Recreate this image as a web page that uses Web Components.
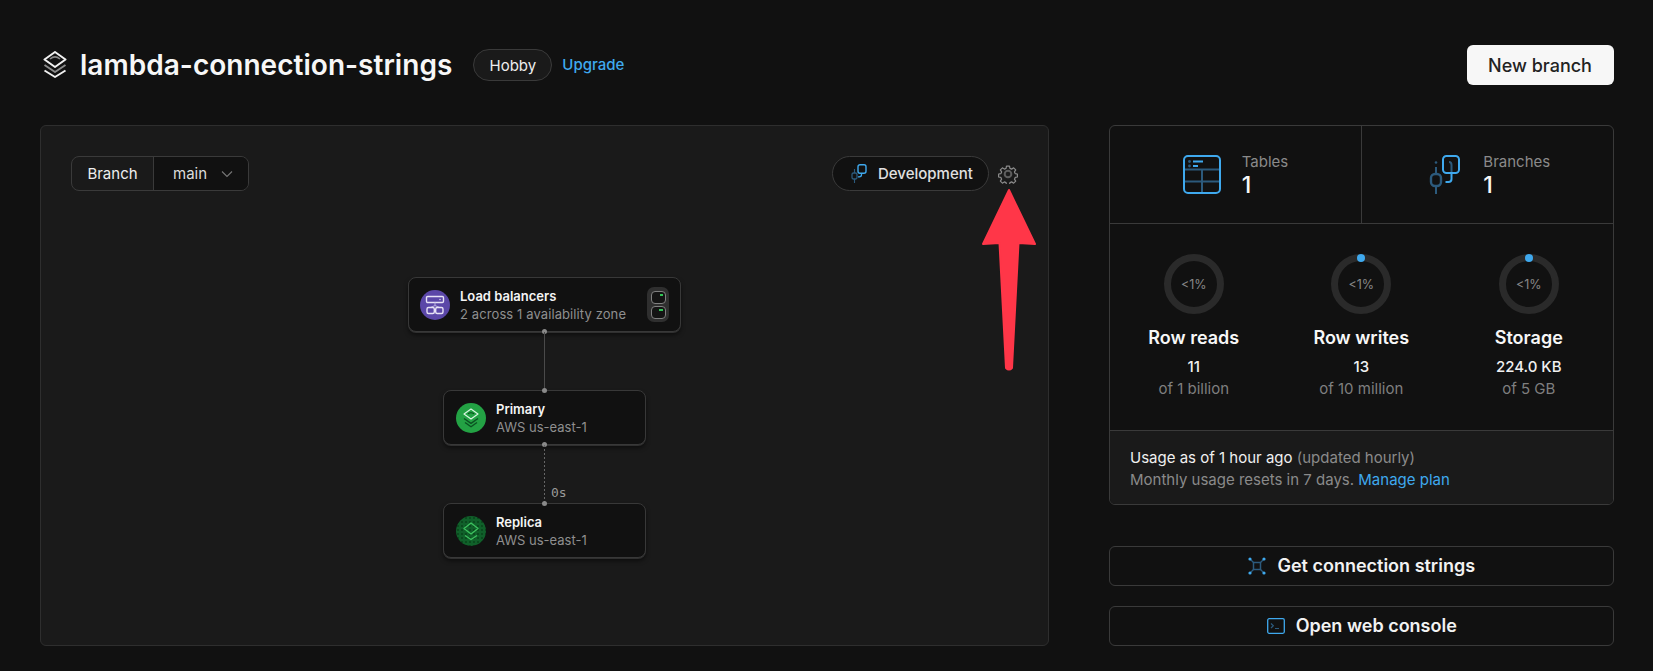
<!DOCTYPE html>
<html>
<head>
<meta charset="utf-8">
<title>lambda-connection-strings</title>
<style>
  html, body { margin: 0; padding: 0; background: #111111; }
  body { font-family: Inter, "Liberation Sans", sans-serif; color: #f5f5f5; }
</style>
</head>
<body>
<db-page>
  <db-header slot="header" name="lambda-connection-strings" plan="Hobby"></db-header>
  <db-graph slot="graph">
    <db-node slot="lb" title-text="Load balancers" sub="2 across 1 availability zone" kind="lb" wide></db-node>
    <db-node slot="primary" title-text="Primary" sub="AWS us-east-1" kind="primary"></db-node>
    <db-node slot="replica" title-text="Replica" sub="AWS us-east-1" kind="replica"></db-node>
  </db-graph>
  <db-stats slot="side">
    <db-count slot="counts" label="Tables" value="1" icon="tables"></db-count>
    <db-count slot="counts" label="Branches" value="1" icon="branches"></db-count>
    <db-usage slot="usage" label="Row reads" value="11" limit="of 1 billion"></db-usage>
    <db-usage slot="usage" label="Row writes" value="13" limit="of 10 million" dot></db-usage>
    <db-usage slot="usage" label="Storage" value="224.0 KB" limit="of 5 GB" dot></db-usage>
  </db-stats>
  <db-action slot="side" label="Get connection strings" icon="connect"></db-action>
  <db-action slot="side" label="Open web console" icon="console"></db-action>
</db-page>

<script>
// shared icons, blue = accent, dim = darker second tone
const BLUE = '#3fa9ee';
const DIM = '#2c5a7c';
const ICONS = {
  tables: `<svg width="38" height="39" viewBox="0 0 38 39" fill="none">
    <path d="M1 14.5h36M1 26.5h36M19 14.5v23" stroke="${DIM}" stroke-width="2"/>
    <rect x="1" y="1" width="36" height="37" rx="4" stroke="${BLUE}" stroke-width="2"/>
    <circle cx="6.5" cy="6.5" r="1.4" fill="${DIM}"/><circle cx="6.5" cy="11" r="1.4" fill="${DIM}"/>
    <path d="M10 6.5h10M10 11h5" stroke="${BLUE}" stroke-width="2"/>
  </svg>`,
  branches: `<svg width="38" height="39" viewBox="-5 0 38 39" fill="none">
    <path d="M7 12v7M7 31v8" stroke="${DIM}" stroke-width="2"/>
    <circle cx="7" cy="7.5" r="1.3" fill="${DIM}"/>
    <rect x="2" y="19" width="10" height="12" rx="4" stroke="${DIM}" stroke-width="2.4"/>
    <rect x="14" y="1" width="16" height="17" rx="3.5" stroke="${BLUE}" stroke-width="2"/>
    <path d="M22.500 18v6c0 2-1 3-3 3h-3" stroke="${BLUE}" stroke-width="2"/>
    <path d="M20 7c1.500 0 2.500 1 2.500 3v7" stroke="${DIM}" stroke-width="2"/>
  </svg>`,
  connect: `<svg width="18" height="18" viewBox="0 0 18 18" fill="none">
    <path d="M2.500 2.500l3.500 3.500M15.500 2.500l-3.500 3.500M2.500 15.500l3.500-3.500M15.500 15.500l-3.500-3.500" stroke="${DIM}" stroke-width="1.300"/>
    <rect x="5.500" y="5.500" width="7" height="7" stroke="${DIM}" stroke-width="1.500"/>
    <circle cx="2" cy="2" r="1.600" fill="${BLUE}"/><circle cx="16" cy="2" r="1.600" fill="${BLUE}"/>
    <circle cx="2" cy="16" r="1.600" fill="${BLUE}"/><circle cx="16" cy="16" r="1.600" fill="${BLUE}"/>
  </svg>`,
  console: `<svg width="18" height="16" viewBox="0 0 18 16" fill="none">
    <rect x=".7" y=".7" width="16.600" height="14.600" rx="1.500" stroke="${BLUE}" stroke-width="1.300"/>
    <path d="M4 5.500l2.300 2.300L4 10M8 10.500h4" stroke="${DIM}" stroke-width="1.200"/>
  </svg>`,
  devBranch: `<svg width="16" height="19" viewBox="0 0 16 19" fill="none">
    <path d="M3.500 5v4M3.500 15v4" stroke="${DIM}" stroke-width="1.100"/>
    <rect x="1" y="9" width="5" height="6" rx="1.500" stroke="${DIM}" stroke-width="1.300"/>
    <rect x="7" y=".7" width="8" height="8.600" rx="2" stroke="${BLUE}" stroke-width="1.400"/>
    <path d="M10.500 9.300v1.500c0 1.200-1 2-2.200 2H7" stroke="${BLUE}" stroke-width="1.300"/>
  </svg>`,
  gear: `<svg width="20" height="20" viewBox="0 0 24 24" fill="none" stroke="#8c8c8c" stroke-width="1.600" stroke-linejoin="round">
    <path d="M10 1.500h4l.6 3 2.300 1 2.600-1.700 2.800 2.800-1.700 2.600 1 2.300 2.900.5v4l-2.900.6-1 2.300 1.700 2.500-2.800 2.800-2.600-1.700-2.300 1-.6 2.900h-4l-.6-2.900-2.300-1-2.500 1.700-2.800-2.800 1.700-2.500-1-2.300-3-.6v-4l3-.5 1-2.300-1.700-2.600 2.800-2.800 2.500 1.700 2.300-1z" transform="translate(1.200 1.200) scale(.9)"/>
    <circle cx="12" cy="12" r="4" stroke="#5e5e5e" stroke-width="2.400"/>
  </svg>`,
  logo: `<svg width="24" height="27" viewBox="0 0 24 27" fill="none">
    <path d="M12 1l10.500 7.500L12 16 1.500 8.500z" stroke="#f0f0f0" stroke-width="2" stroke-linejoin="round"/>
    <path d="M7 8c3-2.500 7-2.500 10 0" stroke="#8a8a8a" stroke-width="1.600"/>
    <path d="M1.500 14l10.500 7 10.500-7" stroke="#8a8a8a" stroke-width="2" stroke-linejoin="round"/>
    <path d="M1.500 19.500l10.500 6.500 10.500-6.500" stroke="#f0f0f0" stroke-width="2" stroke-linejoin="round"/>
  </svg>`,
  lb: `<svg width="20" height="20" viewBox="0 0 20 20" fill="none" stroke="#e6e2f5" stroke-width="1.400">
    <rect x="1.500" y="1.500" width="17" height="6" rx="1.200"/>
    <path d="M10 7.500v3M5.500 12.500l4.500-2 4.500 2" stroke="#b3a8dc" stroke-width="1.100"/>
    <rect x="2" y="12.500" width="7.300" height="6" rx="1.500"/><rect x="10.700" y="12.500" width="7.300" height="6" rx="1.500"/>
    <circle cx="15" cy="4.500" r=".7" fill="#e6e2f5" stroke="none"/>
  </svg>`,
  primary: `<svg width="16" height="20" viewBox="0 0 16 20" fill="none" stroke-linejoin="round">
    <path d="M8 1l7 5-7 5-7-5z" stroke="#d8f5e0" stroke-width="1.200"/>
    <path d="M5 5.800c1.800-1.300 4.200-1.300 6 0" stroke="#0b4f1e" stroke-width="1.100"/>
    <path d="M1 10.500l7 4.800 7-4.800" stroke="#0b5222" stroke-width="1.400"/>
    <path d="M2 14.500l6 4.300 6-4.300" stroke="#0b5222" stroke-width="1.400"/>
  </svg>`,
  replica: `<svg width="16" height="20" viewBox="0 0 16 20" fill="none" stroke-linejoin="round">
    <path d="M8 2l7 5.500-7 5.500-7-5.500z" stroke="#3dc25f" stroke-width="1.300"/>
    <path d="M2 14.500l6 4 6-4" stroke="#3dc25f" stroke-width="1.300"/>
  </svg>`
};

class DbPage extends HTMLElement {
  constructor() {
    super();
    this.attachShadow({ mode: 'open' });
    this.shadowRoot.innerHTML = `
      <style>
        :host { display: block; padding: 45px 39.500px 25px 40px; box-sizing: border-box; width: 1653px; height: 671px; overflow: hidden; }
        .top { height: 80px; }
        .main { display: grid; grid-template-columns: 1009px 504.500px; column-gap: 60px; align-items: start; }
        .side { display: flex; flex-direction: column; }
        ::slotted(db-stats) { margin-bottom: 41px; }
        ::slotted(db-action) { margin-bottom: 20.500px; }
      </style>
      <div class="top"><slot name="header"></slot></div>
      <div class="main">
        <slot name="graph"></slot>
        <div class="side"><slot name="side"></slot></div>
      </div>`;
  }
}

class DbHeader extends HTMLElement {
  constructor() {
    super();
    this.attachShadow({ mode: 'open' });
    this.shadowRoot.innerHTML = `
      <style>
        :host { display: flex; align-items: flex-start; height: 40px; }
        .logo { width: 24px; height: 27px; margin: 6px 13px 0 3px; }
        h1 { margin: 0; font: 600 28px/40px Inter, "Liberation Sans", sans-serif; color: #f7f7f7; letter-spacing: .03px; }
        .plan { margin: 4px 0 0 21px; height: 32px; box-sizing: border-box; width: 79px; display: flex; align-items: center; justify-content: center;
          border: 1px solid #3a3a3a; border-radius: 16px; background: #1a1a1a; font-size: 15px; font-weight: 400; color: #eee; }
        a { margin: 5px 0 0 10px; line-height: 30px; font-size: 15px; font-weight: 500; color: ${BLUE}; }
        button { margin-left: auto; width: 147px; height: 40px; border: 0; border-radius: 6px; background: #f7f7f7; color: #222;
          font: 500 18px Inter, "Liberation Sans", sans-serif; }
      </style>
      <span class="logo">${ICONS.logo}</span>
      <h1>${this.getAttribute('name')}</h1>
      <span class="plan">${this.getAttribute('plan')}</span>
      <a>Upgrade</a>
      <button>New branch</button>`;
  }
}

class DbGraph extends HTMLElement {
  constructor() {
    super();
    this.attachShadow({ mode: 'open' });
    this.shadowRoot.innerHTML = `
      <style>
        :host { display: block; position: relative; height: 521px; box-sizing: border-box; background: #1a1a1a; border: 1px solid #2e2e2e; border-radius: 6px; padding: 30px 30px 0; }
        .bar { display: flex; align-items: center; height: 35px; }
        .select { display: flex; height: 35px; box-sizing: border-box; border: 1px solid #3a3a3a; border-radius: 8px; overflow: hidden; font-size: 15px; }
        .select b { font-weight: 400; width: 81px; display: flex; align-items: center; justify-content: center; border-right: 1px solid #3a3a3a; color: #eee; }
        .select span { width: 94px; background: #111; display: flex; align-items: center; gap: 14px; padding-left: 19px; box-sizing: border-box; color: #ddd; }
        .env { margin-left: auto; width: 157px; height: 35px; box-sizing: border-box; border: 1px solid #3a3a3a; border-radius: 18px; background: #111;
          display: flex; align-items: center; gap: 11px; padding-left: 18px; font-size: 15px; font-weight: 500; color: #e0e0e0; }
        .gear { width: 20px; height: 20px; margin-left: 9px; }
        .flow { display: flex; flex-direction: column; align-items: center; margin: 86px -30px 0; }
        .link { position: relative; width: 1px; }
        .solid { height: 58px; background: #4a4a4a; }
        .dotted { height: 58px; background: repeating-linear-gradient(#666 0 2px, transparent 2px 4px); }
        .link span { position: absolute; left: 7px; bottom: 3px; font: 13px/14px "DejaVu Sans Mono", "Liberation Mono", monospace; color: #999; }
        .arrow { position: absolute; left: 940px; top: 62px; }
      </style>
      <div class="bar">
        <div class="select"><b>Branch</b><span>main
          <svg width="12" height="8" viewBox="0 0 12 8" fill="none"><path d="M1 1.500l5 5 5-5" stroke="#777" stroke-width="1.100"/></svg></span></div>
        <div class="env">${ICONS.devBranch}Development</div>
        <span class="gear">${ICONS.gear}</span>
      </div>
      <div class="flow">
        <slot name="lb"></slot>
        <div class="link solid"></div>
        <slot name="primary"></slot>
        <div class="link dotted"><span>0s</span></div>
        <slot name="replica"></slot>
      </div>
      <!-- red annotation arrow sits on top of the panel -->
      <svg class="arrow" width="56" height="184" viewBox="0 0 56 184">
        <path d="M28 2L54 56 37.500 55 31 180Q28 183 25 180L18.500 55 2 56z" fill="#ff3648" stroke="#ff3648" stroke-width="2" stroke-linejoin="round"/>
      </svg>`;
  }
}

class DbNode extends HTMLElement {
  constructor() {
    super();
    this.attachShadow({ mode: 'open' });
    const kind = this.getAttribute('kind');
    const chip = kind === 'lb' ? `<div class="chip">
        <i><u style="width:3px"></u></i><i><u style="width:4px"></u></i>
      </div>` : '';
    this.shadowRoot.innerHTML = `
      <style>
        :host { display: flex; align-items: center; position: relative; box-sizing: border-box; width: 203px; height: 55px; background: #111; border: 1px solid #383838; border-radius: 8px;
          box-shadow: 0 1px 0 #303030, 0 3px 4px rgba(0,0,0,.5); padding-left: 12px; gap: 10px; }
        :host([wide]) { width: 273px; padding-left: 11px; }
        :host([wide]) .s { letter-spacing: .1px; }
        .av { width: 30px; height: 30px; border-radius: 50%; display: flex; align-items: center; justify-content: center; flex: none; }
        .lb { background: #5b47a8; }
        .primary { background: #23a244; }
        .replica { background: #10602a radial-gradient(#0a4a1e 1px, transparent 1.200px) 0 0 / 4px 4px; }
        .txt { flex: 1; }
        .t { font-size: 13px; line-height: 18px; font-weight: 600; color: #f5f5f5; }
        .s { font-size: 13px; line-height: 18px; color: #8f8f8f; }
        .chip { width: 22px; height: 35px; margin-right: 11px; background: #2f2f2f; border-radius: 7px; display: flex; flex-direction: column; align-items: center; justify-content: center; gap: 2px; }
        .chip i { position: relative; width: 15px; height: 13px; box-sizing: border-box; border: 1px solid #808080; border-radius: 4px; background: #141414; display: block; }
        .chip u { position: absolute; right: 2px; top: 2px; height: 2px; background: #2fc455; }
        .pin { position: absolute; left: 50%; margin-left: -2.500px; width: 5px; height: 5px; border-radius: 50%; background: #8a8a8a; }
        .pin.a { top: -3px; } .pin.b { bottom: -3px; }
      </style>
      <div class="av ${kind}">${ICONS[kind]}</div>
      <div class="txt"><div class="t">${this.getAttribute('title-text')}</div><div class="s">${this.getAttribute('sub')}</div></div>
      ${chip}
      ${kind !== 'lb' ? '<span class="pin a"></span>' : ''}
      ${kind !== 'replica' ? '<span class="pin b"></span>' : ''}`;
  }
}

class DbStats extends HTMLElement {
  constructor() {
    super();
    this.attachShadow({ mode: 'open' });
    this.shadowRoot.innerHTML = `
      <style>
        :host { display: block; height: 380px; box-sizing: border-box; border: 1px solid #3a3a3a; border-radius: 6px; overflow: hidden; }
        .counts { display: grid; grid-template-columns: 252px 1fr; height: 97px; border-bottom: 1px solid #3a3a3a; }
        .usage { display: grid; grid-template-columns: 1fr 1fr 1fr; height: 206px; padding-top: 30px; box-sizing: border-box; }
        .foot { height: 75px; box-sizing: border-box; border-top: 1px solid #3a3a3a; background: #1a1a1a; padding: 16px 20px; font-size: 15px; line-height: 21.500px; color: #8a8a8a; }
        .foot em { font-style: normal; color: #f0f0f0; }
        .foot a { color: ${BLUE}; }
      </style>
      <div class="counts"><slot name="counts"></slot></div>
      <div class="usage"><slot name="usage"></slot></div>
      <div class="foot"><em>Usage as of 1 hour ago</em> (updated hourly)<br>Monthly usage resets in 7 days. <a>Manage plan</a></div>`;
  }
}

class DbCount extends HTMLElement {
  constructor() {
    super();
    this.attachShadow({ mode: 'open' });
    this.shadowRoot.innerHTML = `
      <style>
        :host { display: flex; align-items: center; justify-content: center; gap: 21px; }
        :host(:first-child) { border-right: 1px solid #3a3a3a; }
        .ic { display: flex; }
        .l { font-size: 15px; line-height: 20px; color: #8a8a8a; }
        .v { font-size: 23px; line-height: 26px; font-weight: 500; color: #f7f7f7; }
      </style>
      <span class="ic">${ICONS[this.getAttribute('icon')]}</span>
      <div><div class="l">${this.getAttribute('label')}</div><div class="v">${this.getAttribute('value')}</div></div>`;
  }
}

class DbUsage extends HTMLElement {
  constructor() {
    super();
    this.attachShadow({ mode: 'open' });
    this.shadowRoot.innerHTML = `
      <style>
        :host { display: flex; flex-direction: column; align-items: center; }
        .ring { position: relative; width: 60px; height: 60px; box-sizing: border-box; border: 7px solid #2a2a2a; border-radius: 50%; display: flex; align-items: center; justify-content: center; font-size: 12.500px; color: #888; }
        .dot { position: absolute; top: -7px; left: 50%; margin-left: -4px; width: 8px; height: 8px; border-radius: 50%; background: ${BLUE}; }
        .name { margin-top: 11px; font-size: 18px; line-height: 26px; font-weight: 600; color: #f7f7f7; }
        .val { margin-top: 5px; font-size: 15px; line-height: 22px; font-weight: 500; color: #f0f0f0; }
        .lim { font-size: 15px; line-height: 22px; color: #7f7f7f; }
      </style>
      <div class="ring">&lt;1%${this.hasAttribute('dot') ? '<span class="dot"></span>' : ''}</div>
      <div class="name">${this.getAttribute('label')}</div>
      <div class="val">${this.getAttribute('value')}</div>
      <div class="lim">${this.getAttribute('limit')}</div>`;
  }
}

class DbAction extends HTMLElement {
  constructor() {
    super();
    this.attachShadow({ mode: 'open' });
    this.shadowRoot.innerHTML = `
      <style>
        :host { display: flex; align-items: center; justify-content: center; gap: 11px; height: 39.500px; box-sizing: border-box; border: 1px solid #3a3a3a; border-radius: 6px; padding-left: 1px; font-size: 18px; font-weight: 600; color: #f2f2f2; }
        span { display: flex; }
      </style>
      <span>${ICONS[this.getAttribute('icon')]}</span>${this.getAttribute('label')}`;
  }
}

customElements.define('db-page', DbPage);
customElements.define('db-header', DbHeader);
customElements.define('db-graph', DbGraph);
customElements.define('db-node', DbNode);
customElements.define('db-stats', DbStats);
customElements.define('db-count', DbCount);
customElements.define('db-usage', DbUsage);
customElements.define('db-action', DbAction);
</script>
</body>
</html>
